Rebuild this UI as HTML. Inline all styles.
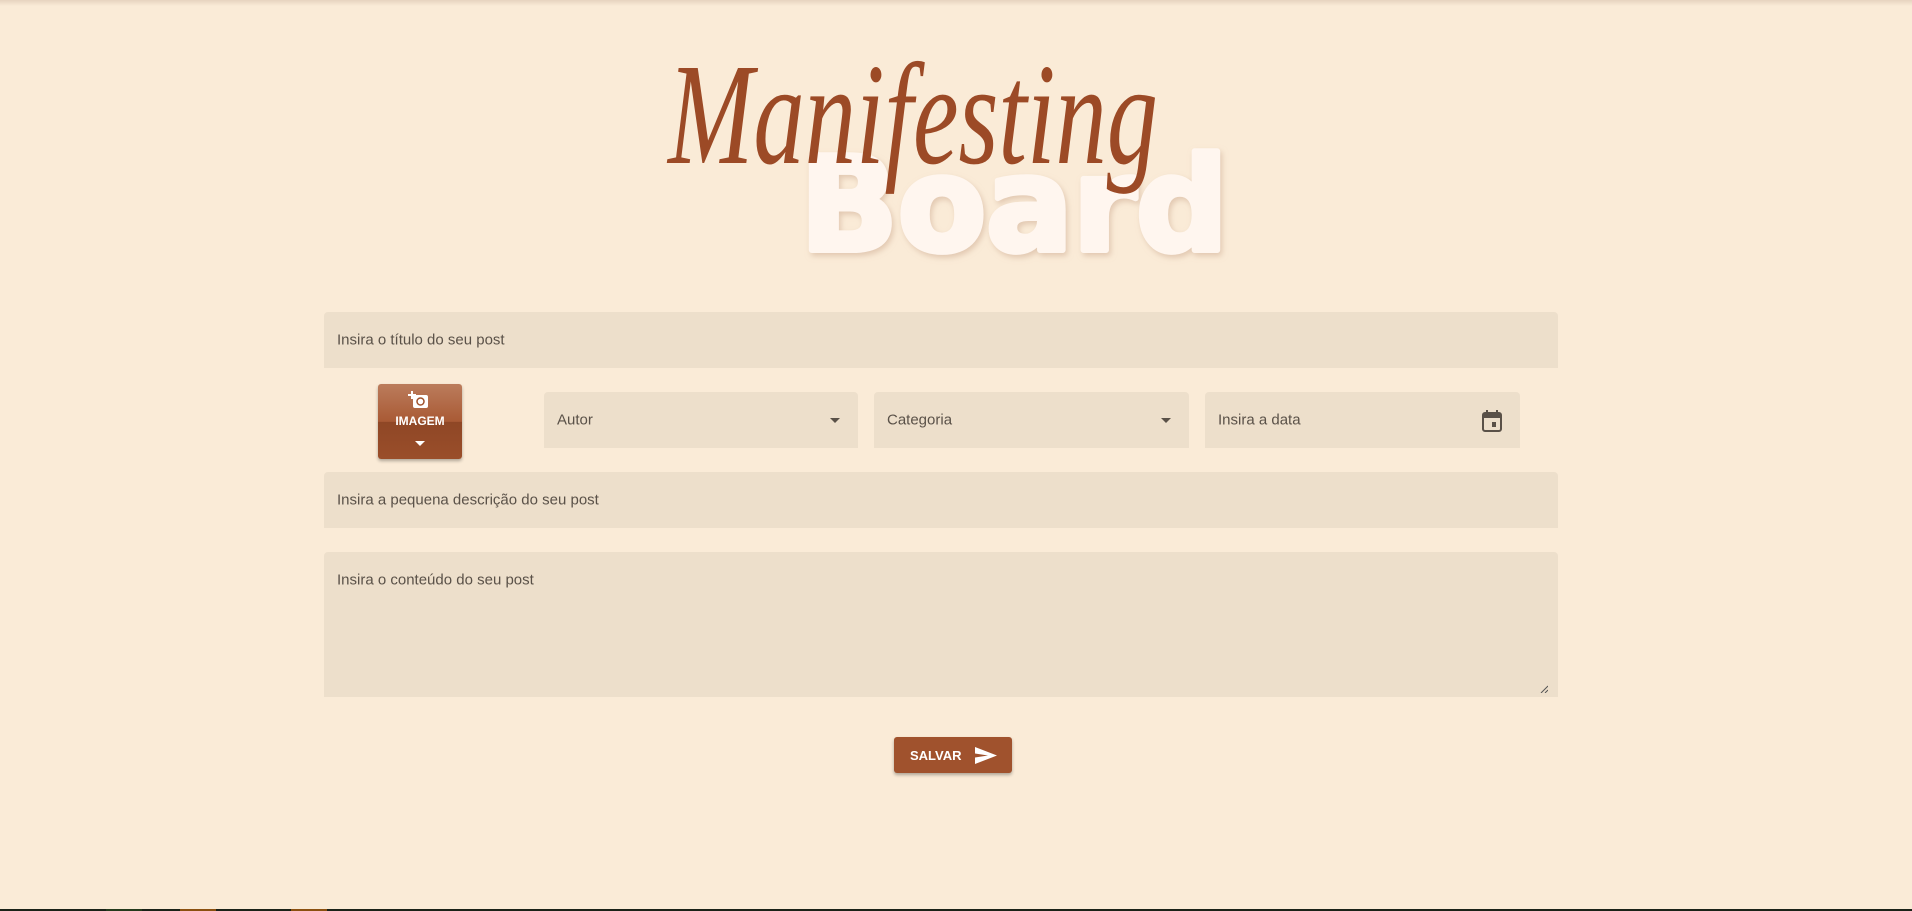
<!DOCTYPE html>
<html><head><meta charset="utf-8"><style>
*{margin:0;padding:0;box-sizing:border-box}
html,body{width:1912px;height:911px;overflow:hidden;background:#faebd7;font-family:"Liberation Sans",sans-serif;position:relative}
.top{position:absolute;left:0;top:0;width:1912px;height:6px;background:linear-gradient(#e6d3bf,#faebd7)}
.f{position:absolute;background:#eddfcb;border-radius:4px 4px 0 0;color:#5a5148;font-size:15px}
.f span{position:absolute;left:13px;top:50%;transform:translateY(-50%)}
.arr{position:absolute;right:18px;top:50%;margin-top:-2px;width:0;height:0;border-left:5px solid transparent;border-right:5px solid transparent;border-top:5px solid #5a5148}
.btn{position:absolute;background:#a0522d;color:#fff;border-radius:3px;box-shadow:0 2px 3px rgba(0,0,0,.3);font-weight:bold}
.bot{position:absolute;left:0;top:909px;width:1912px;height:2px;background:#1a2218}
</style></head><body>
<div class="top"></div>
<svg style="position:absolute;left:0;top:0" width="1912" height="300">
<defs><filter id="s"><feDropShadow dx="2" dy="3" stdDeviation="3" flood-color="#c9a58a" flood-opacity=".5"/></filter></defs>
<text x="800" y="250" font-family="DejaVu Sans" font-weight="bold" font-size="130" fill="#fff6ef" stroke="#fff6ef" stroke-width="6" stroke-linejoin="round" textLength="428" lengthAdjust="spacingAndGlyphs" filter="url(#s)">Board</text>
<text x="668" y="163" font-family="Liberation Serif" font-style="italic" font-size="145" fill="#9c4a26" textLength="490" lengthAdjust="spacingAndGlyphs">Manifesting</text>
</svg>
<div class="f" style="left:324px;top:312px;width:1234px;height:56px"><span>Insira o título do seu post</span></div>
<div class="btn" style="left:378px;top:384px;width:84px;height:75px;background:linear-gradient(#bb7c5c 0%,#a95a35 50%,#8f4726 51%,#9a4e2a 100%);font-size:12px;text-align:center">
<svg style="position:absolute;left:30px;top:6px" width="24" height="20" viewBox="0 0 24 20"><rect x="5" y="5" width="15" height="13" rx="2" fill="#fff"/><circle cx="12.5" cy="11.5" r="3.5" fill="none" stroke="#a0522d" stroke-width="1.5"/><path d="M4 1v8M0 5h8" stroke="#fff" stroke-width="2"/></svg>
<div style="position:absolute;top:30px;width:100%">IMAGEM</div>
<div style="position:absolute;left:37px;top:57px;border-left:5px solid transparent;border-right:5px solid transparent;border-top:5px solid #fff"></div>
</div>
<div class="f" style="left:544px;top:392px;width:314px;height:56px"><span>Autor</span><i class="arr"></i></div>
<div class="f" style="left:874px;top:392px;width:315px;height:56px"><span>Categoria</span><i class="arr"></i></div>
<div class="f" style="left:1205px;top:392px;width:315px;height:56px"><span>Insira a data</span>
<svg style="position:absolute;right:18px;top:18px" width="20" height="22" viewBox="0 0 20 22"><rect x="1" y="3" width="18" height="18" rx="2" fill="none" stroke="#5a5148" stroke-width="2"/><rect x="1" y="3" width="18" height="5" fill="#5a5148"/><path d="M5 0v4M15 0v4" stroke="#5a5148" stroke-width="2"/><rect x="10" y="12" width="4" height="5" fill="#5a5148"/></svg></div>
<div class="f" style="left:324px;top:472px;width:1234px;height:56px"><span>Insira a pequena descrição do seu post</span></div>
<div class="f" style="left:324px;top:552px;width:1234px;height:145px"><span style="top:28px">Insira o conteúdo do seu post</span>
<svg style="position:absolute;right:10px;bottom:4px" width="8" height="8"><path d="M1 8L8 1M5 8L8 5" stroke="#555" stroke-width="1"/></svg></div>
<div class="btn" style="left:894px;top:737px;width:118px;height:36px;font-size:13px">
<span style="position:absolute;left:16px;top:11px">SALVAR</span>
<svg style="position:absolute;left:80px;top:9px" width="24" height="19" viewBox="0 0 24 19"><path d="M1 1L23 9.5L1 18L1 11.5L14 9.5L1 7.5Z" fill="#fff"/></svg></div>
<div class="bot"></div>
<div style="position:absolute;left:106px;top:909px;width:36px;height:2px;background:#243a1c"></div>
<div style="position:absolute;left:180px;top:909px;width:36px;height:2px;background:#8b5010"></div>
<div style="position:absolute;left:291px;top:909px;width:36px;height:2px;background:#8b5010"></div>
</body></html>
